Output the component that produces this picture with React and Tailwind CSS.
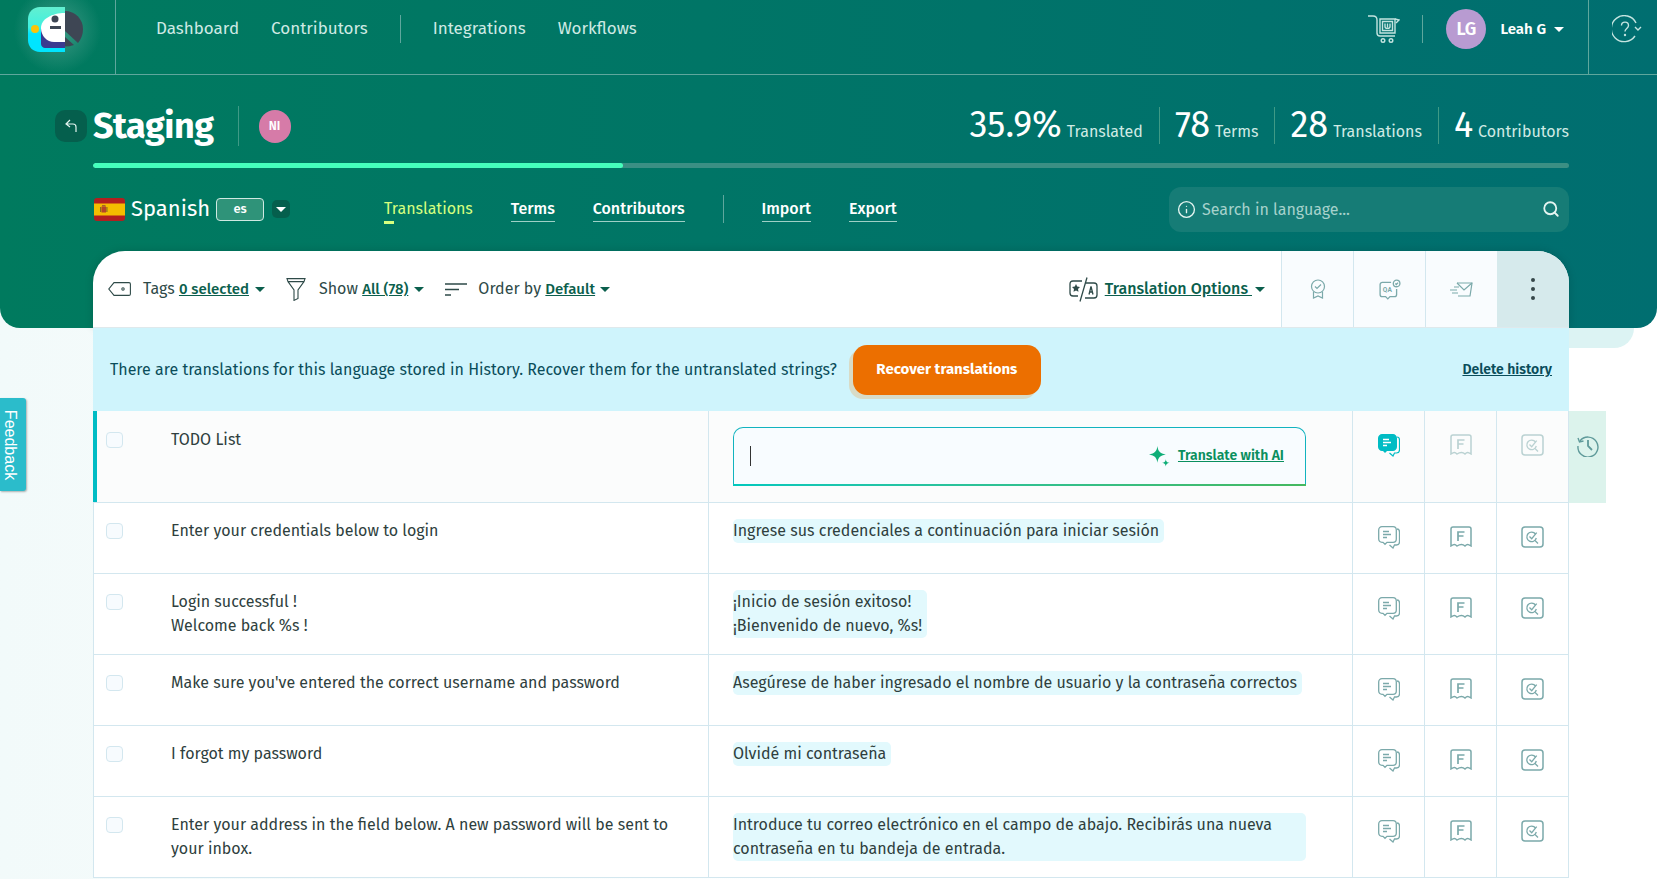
import { Search, Info } from "lucide-react";

const rows = [
  { h: "h-[71px]", source: ["Enter your credentials below to login"], target: ["Ingrese sus credenciales a continuación para iniciar sesión"] },
  { h: "h-[81px]", source: ["Login successful !", "Welcome back %s !"], target: ["¡Inicio de sesión exitoso!", "¡Bienvenido de nuevo, %s!"] },
  { h: "h-[71px]", source: ["Make sure you've entered the correct username and password"], target: ["Asegúrese de haber ingresado el nombre de usuario y la contraseña correctos"] },
  { h: "h-[71px]", source: ["I forgot my password"], target: ["Olvidé mi contraseña"] },
  {
    h: "h-[81px]",
    source: ["Enter your address in the field below. A new password will be sent to", "your inbox."],
    target: ["Introduce tu correo electrónico en el campo de abajo. Recibirás una nueva", "contraseña en tu bandeja de entrada."],
    block: true,
  },
];

function Caret({ className = "border-t-[#0b5f4d]" }) {
  return <span className={`inline-block w-0 h-0 border-x-[5px] border-x-transparent border-t-[5px] ${className}`} />;
}

function Logo() {
  return (
    <svg width="56" height="46" viewBox="0 0 56 46" fill="none">
      <defs>
        <linearGradient id="logoBg" x1="0" y1="0" x2="0" y2="1">
          <stop offset="0" stopColor="#63efd0" />
          <stop offset="0.45" stopColor="#3ff0e0" />
          <stop offset="0.6" stopColor="#00e5ff" />
          <stop offset="1" stopColor="#00e5ff" />
        </linearGradient>
      </defs>
      <path d="M12 0h25v45H12C5 45 0 40 0 33V12C0 5 5 0 12 0z" fill="url(#logoBg)" />
      <path d="M13 22h24v19H17c-2 0-4-2-4-4z" fill="#3b3b8f" />
      <path d="M37 6v29H26c-7 0-13-6-13-14C13 12 24 6 37 6z" fill="#fff" />
      <circle cx="7" cy="22" r="4" fill="#fbc40a" />
      <circle cx="27" cy="12" r="3.5" fill="#3e4654" />
      <rect x="22" y="19" width="11" height="3" fill="#3e4654" />
      <path d="M37 4c10 0 18 8 18 18 0 6-2 10-5 14L37 24z" fill="#3e4654" />
      <path d="M37 30l9 8c-3 1-6 1.500-9 1.500z" fill="#3e4654" />
    </svg>
  );
}

function Cart() {
  return (
    <svg width="32" height="28" viewBox="0 0 32 28" fill="none" stroke="#c4e4e0" strokeWidth="1.400">
      <path d="M0 1h5c3 0 4 1 4 4v13c0 2 1 3 3 3h15" />
      <path d="M12 4h15v14H12z" />
      <path d="M14.500 6.500h10v9h-10z" />
      <path d="M17 8.500v3c0 2.500 5 2.500 5 0v-3M19.500 8.500v4" />
      <path d="M27 4l4 1-3 3" />
      <circle cx="15" cy="25.500" r="1.800" />
      <circle cx="23" cy="25.500" r="1.800" />
    </svg>
  );
}

function HelpIcon() {
  return (
    <svg width="30" height="28" viewBox="0 0 30 28" fill="none" stroke="#c4e4e0" strokeWidth="1.400">
      <path d="M23 21a13 13 0 1 1 1-13" />
      <path d="M9.500 10.500c0-4.500 7-4.500 7 0 0 3-3.500 3-3.500 6" />
      <circle cx="13" cy="20" r=".5" />
      <path d="M23 12l3 3 3-3" />
    </svg>
  );
}

function Flag() {
  return (
    <svg width="31" height="23" viewBox="0 0 31 23">
      <rect width="31" height="23" rx="3" fill="#b21f1f" />
      <rect y="5.500" width="31" height="12" fill="#f4bd00" />
      <rect x="7.500" y="8.500" width="4.500" height="6" fill="#b5452a" />
      <rect x="6" y="9" width="1.200" height="5" fill="#8c6b1f" />
      <rect x="12.300" y="9" width="1.200" height="5" fill="#8c6b1f" />
      <rect x="8" y="7" width="3.500" height="1.500" fill="#a8642a" />
    </svg>
  );
}

function TagIcon() {
  return (
    <svg width="23" height="14" viewBox="0 0 23 14" fill="none" stroke="#2e4a48" strokeWidth="1.100">
      <path d="M6 .6h15c.8 0 1.400.6 1.400 1.400v10c0 .8-.6 1.400-1.400 1.400H6L.8 7z" />
      <circle cx="15" cy="7" r="1.200" />
    </svg>
  );
}

function FilterIcon() {
  return (
    <svg width="20" height="23" viewBox="0 0 20 23" fill="none" stroke="#2e4a48" strokeWidth="1.100">
      <path d="M1 .6h18l-1 3H2zM2 3.600l6 8.400v10.400l4-2V12l6-8.400" />
    </svg>
  );
}

function SortIcon() {
  return (
    <svg width="22" height="13" viewBox="0 0 22 13" fill="none" stroke="#2e4a48" strokeWidth="1.300">
      <path d="M0 1h22M0 6.500h14M0 12h6" />
    </svg>
  );
}

function TranslateIcon() {
  return (
    <svg width="29" height="25" viewBox="0 0 29 25" fill="none" stroke="#2e4a48" strokeWidth="1.300">
      <path d="M13 4H4C2 4 1 5 1 7v9c0 2 1 3 3 3h5" />
      <path d="M17 6h8c2 0 3 1 3 3v9c0 2-1 3-3 3h-9" />
      <path d="M18 .5L11 24.500" />
      <path d="M7 7l1.200 2.600 2.800.4-2 2 .5 2.800L7 13.500l-2.500 1.300.5-2.800-2-2 2.800-.4z" fill="#2e4a48" stroke="none" />
      <path d="M20 17.500l2-8 2 8M20.600 15h2.800" />
    </svg>
  );
}

function BadgeIcon() {
  return (
    <svg width="16" height="20" viewBox="0 0 16 20" fill="none" stroke="#7ba9aa" strokeWidth="1.200">
      <circle cx="8" cy="7.500" r="6.500" />
      <path d="M5 7.500l2 2 4-4" />
      <path d="M3.500 13v6l4.500-2 4.500 2v-6" />
    </svg>
  );
}

function QaIcon() {
  return (
    <svg width="22" height="21" viewBox="0 0 20 19" fill="none" stroke="#7ba9aa" strokeWidth="1.200">
      <path d="M11 3H3C2 3 1 4 1 5v9c0 1 1 2 2 2h3l2 2 2-2h4c1 0 2-1 2-2V9" />
      <circle cx="16" cy="4" r="3" />
      <path d="M14.800 4l1 1 1.500-1.800" />
      <text x="3.500" y="12" fontSize="6" fontWeight="700" fill="#7ba9aa" stroke="none" fontFamily="Roboto">QA</text>
    </svg>
  );
}

function SendIcon() {
  return (
    <svg width="23" height="15" viewBox="0 0 23 15" fill="none" stroke="#7ba9aa" strokeWidth="1.200">
      <path d="M7 1h15l-2 13H8" />
      <path d="M7 1l7 7 8-7" />
      <path d="M4 5h5M0 8h7M2 11h6" />
    </svg>
  );
}

function MoreIcon() {
  return (
    <svg width="6" height="24" viewBox="0 0 6 24" fill="#36474a">
      <circle cx="3" cy="3" r="2" />
      <circle cx="3" cy="12" r="2" />
      <circle cx="3" cy="21" r="2" />
    </svg>
  );
}

function NotesIcon({ solid }) {
  if (solid) {
    return (
      <svg width="22" height="23" viewBox="0 0 22 23" fill="none">
        <path d="M19 3c2 0 2.500 1 2.500 3v10c0 2-1 3-3 3h-2l-1.500 3-3.500-3" stroke="#00bcc4" strokeWidth="1.200" />
        <path d="M4 0h11c2 0 4 2 4 4v9c0 2-2 4-4 4H9l-2 2-2-2H4c-2 0-4-2-4-4V4c0-2 2-4 4-4z" fill="#00bcc4" />
        <path d="M5 5.500h6M5 8.500h8M5 11.500h4" stroke="#fff" strokeWidth="1.300" />
      </svg>
    );
  }
  return (
    <svg width="22" height="23" viewBox="0 0 22 23" fill="none" stroke="#7ba9aa" strokeWidth="1.300">
      <path d="M19 3c2 0 2.500 1 2.500 3v10c0 2-1 3-3 3h-2l-1.500 3-3.500-3" />
      <path d="M4 .7h11c2 0 3.300 1.300 3.300 3.300v9c0 2-1.300 3.300-3.300 3.300H9l-2 2-2-2H4c-2 0-3.300-1.300-3.300-3.300V4C.7 2 2 .7 4 .7z" fill="#fff" />
      <path d="M5 5.500h6M5 8.500h8M5 11.500h4" />
    </svg>
  );
}

function ReceiptIcon({ dim }) {
  return (
    <svg className={dim ? "opacity-50" : ""} width="22" height="21" viewBox="0 0 22 21" fill="none" stroke="#7ba9aa" strokeWidth="1.500">
      <path d="M1 20V3c0-1 1-2 2-2h16c1 0 2 1 2 2v17c-3-2-4-2-6 0-2-2-5-2-8 0-2-2-3-2-6 0z" />
      <path d="M8 15V6h6.500M8 10h5.500" strokeWidth="1.700" />
    </svg>
  );
}

function ReviewIcon({ dim }) {
  return (
    <svg className={dim ? "opacity-50" : ""} width="23" height="22" viewBox="0 0 23 22" fill="none" stroke="#7ba9aa" strokeWidth="1.500">
      <rect x="1" y="1" width="21" height="20" rx="3" />
      <path d="M14.500 8a4.800 4.800 0 1 0 .8 4" strokeWidth="1.300" />
      <path d="M14 14.500l3 3" strokeWidth="1.300" />
      <path d="M8.500 10.500l2.200 2.200 5-6" strokeWidth="1.300" />
    </svg>
  );
}

function CellIcons({ active }) {
  return (
    <>
      <div className="w-[72px] border-l border-[#d3e7ef] flex justify-center pt-[23px]"><NotesIcon solid={active} /></div>
      <div className="w-[72px] border-l border-[#d3e7ef] flex justify-center pt-[23px]"><ReceiptIcon dim={active} /></div>
      <div className="w-[72px] border-l border-[#d3e7ef] flex justify-center pt-[23px]"><ReviewIcon dim={active} /></div>
    </>
  );
}

function Checkbox() {
  return <span className="block w-[17px] h-[16px] rounded-[4px] border border-[#d3e7ef] bg-[#f7fbfe]" />;
}

function Row({ row }) {
  return (
    <div className={`flex ${row.h} border-b border-[#d3e7ef] bg-white`}>
      <div className="w-[614px] flex pl-[12px] pt-[16px] text-[16px] leading-[24px] text-[#2f3f3e]">
        <div className="w-[65px] pt-[4px]"><Checkbox /></div>
        <div>{row.source.map((s) => <div key={s}>{s}</div>)}</div>
      </div>
      <div className="flex-1 border-l border-[#d3e7ef] pl-[24px] pt-[16px] text-[16px] leading-[24px] text-[#2f3f3e]">
        {row.block ? (
          <div className="w-[573px] rounded-[5px] bg-[#e2f9fd]">
            {row.target.map((s) => <div key={s}>{s}</div>)}
          </div>
        ) : (
          <div className="inline-block rounded-[5px] bg-[#e2f9fd] pr-[5px]">
            {row.target.map((s) => <div key={s}>{s}</div>)}
          </div>
        )}
      </div>
      <CellIcons />
    </div>
  );
}

function Stat({ value, label, divider }) {
  return (
    <div className={`flex items-baseline h-[37px] ${divider ? "ml-[16px] pl-[15px] border-l border-[#3f9a86]" : ""}`}>
      <span className="text-[36px] leading-[37px] text-white">{value}</span>
      <span className="ml-[5px] text-[16px]">{label}</span>
    </div>
  );
}

export default function App() {
  return (
    <div className="relative min-h-[879px] overflow-hidden bg-gradient-to-r from-[#f2fafa] via-white to-white font-['Fira_Sans','Noto_Sans',sans-serif] text-[16px]">
      <header className="h-[328px] rounded-b-[20px] bg-gradient-to-r from-[#007a5e] to-[#006e70] text-white">
        <nav className="h-[75px] flex border-b border-[#5fa79d]">
          <div className="w-[116px] border-r border-[#5fa79d] flex pl-[28px] pt-[7px] bg-[radial-gradient(circle_at_50%_40%,#3f9a86_0%,transparent_60%)]">
            <Logo />
          </div>
          <div className="flex items-center h-[58px] pl-[40px] text-[17px] text-[#cfeae4]">
            <span>Dashboard</span>
            <span className="ml-[32px]">Contributors</span>
            <span className="ml-[32px] w-px h-[28px] bg-[#5fa79d]" />
            <span className="ml-[32px]">Integrations</span>
            <span className="ml-[32px]">Workflows</span>
          </div>
          <div className="ml-auto flex items-center h-[58px]">
            <Cart />
            <span className="ml-[22px] w-px h-[28px] bg-[#5fa79d]" />
            <span className="ml-[23px] w-[40px] h-[40px] rounded-full bg-[#b89bd1] flex items-center justify-center font-semibold text-[18px]">LG</span>
            <span className="ml-[14px] font-semibold text-[15px]">Leah G</span>
            <Caret className="border-t-white ml-[8px]" />
            <span className="w-[24px]" />
          </div>
          <div className="w-[69px] border-l border-[#5fa79d] flex pl-[23px] pt-[15px]">
            <HelpIcon />
          </div>
        </nav>
        <div className="relative pl-[93px] pr-[88px]">
          <div className="flex items-center h-[88px] pt-[12px]">
            <span className="absolute left-[55px] top-[35px] w-[32px] h-[32px] rounded-[10px] bg-[#055f4d] flex items-center justify-center">
              <svg width="14" height="14" viewBox="0 0 14 14" fill="none" stroke="#e5f5f1" strokeWidth="1.200"><path d="M6 1L2 5l4 3M2 5h7c2 0 3 1 3 3v5" /></svg>
            </span>
            <h1 className="mt-[2px] font-bold text-[36px] leading-none tracking-[-0.5px]">Staging</h1>
            <span className="ml-[24px] mt-[2px] w-px h-[40px] bg-[#3f9a86]" />
            <span className="ml-[20px] mt-[2px] w-[32px] h-[33px] rounded-full bg-[#d67ba8] flex items-center justify-center font-semibold text-[12px]">NI</span>
            <div className="ml-auto flex items-end text-[#cfeae4]">
              <Stat value="35.9%" label="Translated" />
              <Stat value="78" label="Terms" divider />
              <Stat value="28" label="Translations" divider />
              <Stat value="4" label="Contributors" divider />
            </div>
          </div>
          <div className="h-[5px] rounded-full bg-[#3b8f84] overflow-hidden">
            <div className="h-full rounded-full bg-[#45ffbc] w-[35.9%]" />
          </div>
          <div className="flex items-center h-[64px] pt-[18px]">
            <span className="ml-px flex"><Flag /></span>
            <span className="ml-[6px] -mt-[2px] text-[22px]">Spanish</span>
            <span className="ml-[6px] w-[48px] h-[23px] rounded-[4px] border border-[#cfe9e2] bg-[#2f9379] flex items-center justify-center text-[13px] font-medium">es</span>
            <span className="ml-[8px] w-[18px] h-[18px] rounded-[5px] bg-[#055f4d] flex items-center justify-center">
              <Caret className="border-t-white" />
            </span>
            <span className="ml-[94px] relative text-[#d6ff7f]">
              Translations
              <span className="absolute left-0 -bottom-[3px] w-[10px] h-[3px] bg-[#d6ff7f]" />
            </span>
            <span className="ml-[38px] font-medium border-b border-[#9ed0c6]">Terms</span>
            <span className="ml-[38px] font-medium border-b border-[#9ed0c6]">Contributors</span>
            <span className="ml-[38px] w-px h-[28px] bg-[#5fa79d]" />
            <span className="ml-[38px] font-medium border-b border-[#9ed0c6]">Import</span>
            <span className="ml-[38px] font-medium border-b border-[#9ed0c6]">Export</span>
            <div className="ml-auto w-[400px] h-[45px] rounded-[12px] bg-[#167c76] flex items-center pl-[8px] pr-[9px] text-[#a6d2cc]">
              <Info size={19} color="#e5f5f1" strokeWidth={1.7} />
              <span className="ml-[6px] mt-[2px]">Search in language...</span>
              <Search size={18} color="#e5f5f1" strokeWidth={2.4} className="ml-auto" />
            </div>
          </div>
        </div>
      </header>

      <main className="relative w-[1476px] ml-[93px] -mt-[77px]">
        <div className="flex h-[77px] rounded-t-[32px] overflow-hidden bg-white border-b border-[#dfe9ec] shadow-[0_0_8px_rgba(0,0,0,0.15)] text-[#2e4a48]">
          <div className="flex items-center pl-[15px] flex-1">
            <TagIcon />
            <span className="ml-[12px]">Tags <a className="font-medium text-[15px] underline text-[#0b5f4d]">0 selected</a></span>
            <Caret className="ml-[6px] border-t-[#0b5f4d]" />
            <span className="ml-[21px] flex"><FilterIcon /></span>
            <span className="ml-[13px]">Show <a className="font-medium text-[15px] underline text-[#0b5f4d]">All (78)</a></span>
            <Caret className="ml-[6px] border-t-[#0b5f4d]" />
            <span className="ml-[21px] flex"><SortIcon /></span>
            <span className="ml-[11px]">Order by <a className="font-medium text-[15px] underline text-[#0b5f4d]">Default</a></span>
            <Caret className="ml-[5px] border-t-[#0b5f4d]" />
            <div className="ml-auto flex items-center pr-[16px]">
              <TranslateIcon />
              <a className="ml-[7px] font-medium underline text-[16px] text-[#0b5f4d] whitespace-pre">Translation Options </a>
              <Caret className="ml-[3px] border-t-[#0b5f4d]" />
            </div>
          </div>
          <div className="w-[72px] border-l border-[#d3e7ef] bg-[#f9fcfe] flex items-center justify-center"><BadgeIcon /></div>
          <div className="w-[72px] border-l border-[#d3e7ef] bg-[#f9fcfe] flex items-center justify-center"><QaIcon /></div>
          <div className="w-[72px] border-l border-[#d3e7ef] bg-[#f9fcfe] flex items-center justify-center"><SendIcon /></div>
          <div className="w-[72px] bg-[#d6eaec] flex items-center justify-center"><MoreIcon /></div>
        </div>

        <div className="flex items-center h-[83px] bg-[#cff4fc] pl-[17px] pr-[17px] text-[#0a4d5a]">
          <span>There are translations for this language stored in History. Recover them for the untranslated strings?</span>
          <button className="ml-[16px] w-[188px] h-[50px] rounded-[14px] bg-[#ec6f00] text-white font-bold text-[15px] shadow-[-4px_4px_0_rgba(216,216,192,0.9)]">Recover translations</button>
          <a className="ml-auto font-semibold text-[14px] underline text-[#0a4d5a]">Delete history</a>
        </div>

        <div className="border-x border-[#d3e7ef]">
          <div className="flex h-[92px] border-b border-[#d3e7ef] bg-[#fbfcfc]">
            <div className="w-[615px] -ml-px flex pl-[9px] pt-[17px] text-[#2f3f3e] border-l-[4px] border-[#00bcc4]">
              <div className="w-[65px] pt-[4px]"><Checkbox /></div>
              <div className="leading-[24px]">TODO List</div>
            </div>
            <div className="flex-1 border-l border-[#d3e7ef] pl-[24px] pt-[16px]">
              <div className="w-[573px]">
                <div className="h-[57px] rounded-t-[10px] border-t border-x border-[#12b3bf] bg-[#f8fcff] flex items-center pl-[16px] pr-[21px]">
                  <span className="w-px h-[20px] bg-[#333]" />
                  <svg className="ml-auto" width="21" height="21" viewBox="0 0 20 20" fill="#0fae78">
                    <path d="M8 0c.6 5 2.500 7.200 8 8-5.500.8-7.400 3-8 8-.6-5-2.500-7.200-8-8 5.500-.8 7.400-3 8-8z" />
                    <path d="M16 12.500c.3 2 1 3 3.500 3.500-2.500.5-3.200 1.500-3.500 3.500-.3-2-1-3-3.500-3.500 2.500-.5 3.200-1.500 3.500-3.500z" />
                  </svg>
                  <a className="ml-[8px] -mt-[2px] font-semibold text-[14px] underline text-[#0a8f5e]">Translate with AI</a>
                </div>
                <div className="h-[2px] bg-gradient-to-r from-[#00c8bd] to-[#45b85f]" />
              </div>
            </div>
            <CellIcons active />
          </div>
          {rows.map((row) => <Row key={row.source[0]} row={row} />)}
        </div>

        <div className="absolute left-[1476px] top-[160px] w-[37px] h-[92px] bg-[#dcf3ec] flex justify-center pt-[24px]">
          <svg width="22" height="22" viewBox="0 0 22 22" fill="none" stroke="#5f9a9a" strokeWidth="1.400">
            <path d="M3 6a10 10 0 1 1-2 5" />
            <path d="M1 3l1.500 4 4-1" />
            <path d="M11 5v6l4 4" strokeWidth="1.800" />
          </svg>
        </div>
        <div className="absolute left-[1476px] top-[77px] w-[65px] h-[20px] bg-[#dcf3f3] rounded-br-[20px]" />
      </main>

      <div className="absolute left-0 top-[398px] w-[26px] h-[93px] rounded-r-[3px] bg-[#2bbccb] shadow-[1px_1px_2px_rgba(0,0,0,0.3)] flex items-center justify-center pr-[6px]">
        <span className="rotate-90 whitespace-nowrap text-white text-[16px] font-['Liberation_Sans',sans-serif]">Feedback</span>
      </div>
    </div>
  );
}
